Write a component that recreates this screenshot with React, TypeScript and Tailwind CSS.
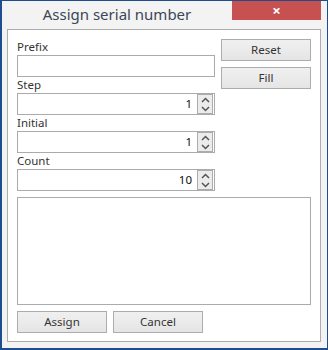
import React from 'react';

const font = { fontFamily: '"Noto Sans", "Open Sans", sans-serif' };

function Spinner() {
  return (
    <div className="flex flex-col w-[16px] h-[20px] border border-[#acacac] bg-[#ececec] my-auto mr-[1px]">
      <div className="flex-1 flex items-center justify-center">
        <svg width="9" height="6" viewBox="0 0 9 6">
          <path d="M1 5 L4.5 1.5 L8 5" fill="none" stroke="#555" strokeWidth="1.5" />
        </svg>
      </div>
      <div className="flex-1 flex items-center justify-center">
        <svg width="9" height="6" viewBox="0 0 9 6">
          <path d="M1 1 L4.5 4.5 L8 1" fill="none" stroke="#555" strokeWidth="1.5" />
        </svg>
      </div>
    </div>
  );
}

function Field({ label, value, spin }: { label: string; value?: string; spin?: boolean }) {
  return (
    <div className="flex flex-col">
      <div className="h-[16px] leading-[16px] text-[11.5px] text-[#333]">{label}</div>
      <div className="h-[22px] border border-[#ababab] bg-white flex items-stretch">
        <div className="flex-1 text-right pr-[5px] text-[11.5px] leading-[20px] text-[#111]">{value}</div>
        {spin && <Spinner />}
      </div>
    </div>
  );
}

function Btn({ children, className = '' }: { children: React.ReactNode; className?: string }) {
  return (
    <div
      className={`h-[22px] border border-[#acacac] bg-gradient-to-b from-[#f0f0f0] to-[#e5e5e5] flex items-center justify-center text-[11.5px] text-[#333] ${className}`}
    >
      {children}
    </div>
  );
}

export default function App() {
  return (
    <div className="w-[328px] h-[350px] bg-white" style={font}>
      <div className="w-[328px] h-[350px] flex flex-col bg-[#f3f3f3] border-t border-b-2 border-l-2 border-r border-[#1f4e8f]">
        <div className="h-[28px] flex">
          <div className="w-[230px] flex items-center justify-center text-[15px] text-[#3b4657] pb-[2px]">
            Assign serial number
          </div>
          <div className="w-[89px] h-[19px] bg-[#c75050] flex items-center justify-center text-white text-[15px] font-bold leading-none">
            ×
          </div>
        </div>
        <div className="ml-[5px] w-[314px] h-[313px] bg-white border border-[#adadad] pt-[9px] px-[9px] flex flex-col">
          <div className="flex gap-[6px]">
            <div className="w-[198px] flex flex-col">
              <Field label="Prefix" />
              <Field label="Step" value="1" spin />
              <Field label="Initial" value="1" spin />
              <Field label="Count" value="10" spin />
            </div>
            <div className="w-[90px] flex flex-col gap-[6px]">
              <Btn>Reset</Btn>
              <Btn>Fill</Btn>
            </div>
          </div>
          <div className="mt-[6px] h-[108px] border border-[#ababab] bg-white" />
          <div className="mt-[6px] flex gap-[6px]">
            <Btn className="w-[90px]">Assign</Btn>
            <Btn className="w-[90px]">Cancel</Btn>
          </div>
        </div>
      </div>
    </div>
  );
}
